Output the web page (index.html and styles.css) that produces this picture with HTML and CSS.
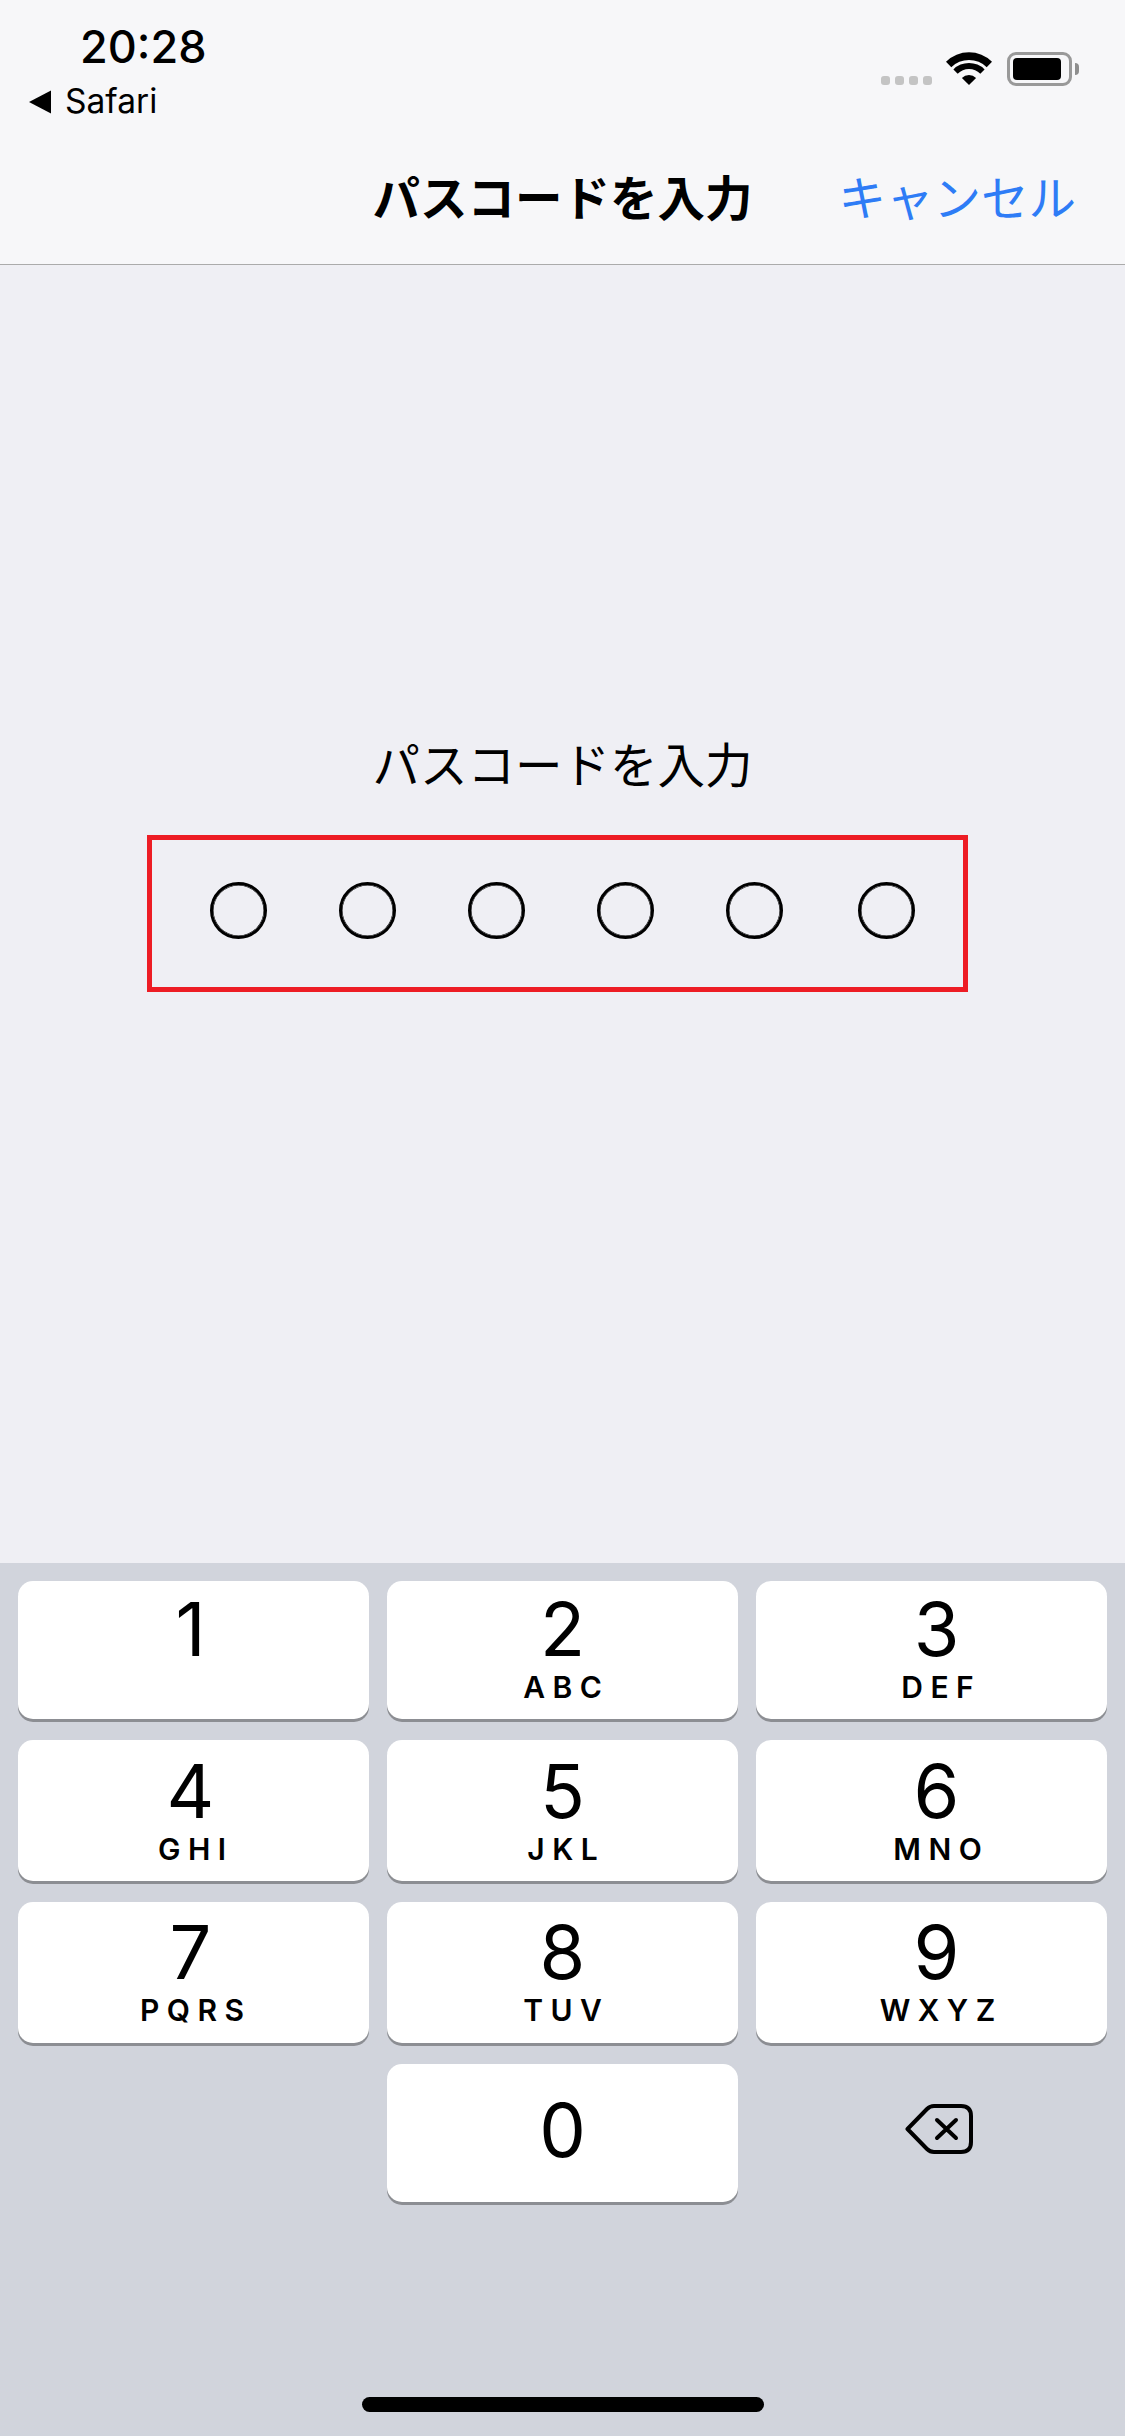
FILE: index.html
```html
<!DOCTYPE html>
<html lang="ja">
<head>
<meta charset="utf-8">
<title>パスコードを入力</title>
<link rel="stylesheet" href="styles.css">
</head>
<body>
<div class="screen">
  <header class="header">
    <div class="statusbar">
      <div class="status-left">
        <div class="time">20:28</div>
        <div class="backlink">
          <svg class="back-tri" width="22" height="24" viewBox="0 0 22 24"><path d="M0 12 L22 0.5 V23.5 Z" fill="#000"/></svg>
          <span>Safari</span>
        </div>
      </div>
      <div class="status-right">
        <div class="signal"><i></i><i></i><i></i><i></i></div>
        <svg class="wifi" width="46" height="34" viewBox="0 0 46 34">
          <path d="M0 9.7 A33 33 0 0 1 46 9.7 L40.7 15.3 A25 25 0 0 0 5.3 15.3 Z" fill="#000"/>
          <path d="M7.4 17.4 A22 22 0 0 1 38.6 17.4 L34.3 21.7 A16 16 0 0 0 11.7 21.7 Z" fill="#000"/>
          <path d="M23 33 L15.9 25.9 A10 10 0 0 1 30.1 25.9 Z" fill="#000"/>
        </svg>
        <div class="battery"><div class="battery-fill"></div></div>
        <div class="battery-cap"></div>
      </div>
    </div>
    <div class="navbar">
      <span></span>
      <h1 class="nav-title">パスコードを入力</h1>
      <a class="nav-cancel">キャンセル</a>
    </div>
  </header>
  <main class="main">
    <p class="prompt">パスコードを入力</p>
    <div class="dots-frame">
      <span class="dot"></span>
      <span class="dot"></span>
      <span class="dot"></span>
      <span class="dot"></span>
      <span class="dot"></span>
      <span class="dot dot-last"></span>
    </div>
  </main>
  <section class="keyboard">
    <div class="keys">
      <div class="key row1 col1"><span class="num">1</span></div>
      <div class="key row1"><span class="num">2</span><span class="letters">ABC</span></div>
      <div class="key row1 col3"><span class="num">3</span><span class="letters">DEF</span></div>
      <div class="key row2 col1"><span class="num">4</span><span class="letters">GHI</span></div>
      <div class="key row2"><span class="num">5</span><span class="letters">JKL</span></div>
      <div class="key row2 col3"><span class="num">6</span><span class="letters">MNO</span></div>
      <div class="key row3 col1"><span class="num">7</span><span class="letters">PQRS</span></div>
      <div class="key row3"><span class="num">8</span><span class="letters">TUV</span></div>
      <div class="key row3 col3"><span class="num">9</span><span class="letters">WXYZ</span></div>
      <div class="key-blank"></div>
      <div class="key row4"><span class="num">0</span></div>
      <div class="key-delete">
        <svg width="68" height="50" viewBox="0 0 68 50" fill="none" stroke="#000" stroke-width="4" stroke-linejoin="round" stroke-linecap="round">
          <path d="M2.5 25 L22 5 Q25 2 29 2 H56 Q66 2 66 12 V38 Q66 48 56 48 H29 Q25 48 22 45 Z"/>
          <path d="M32 16 L51 34 M51 16 L32 34"/>
        </svg>
      </div>
    </div>
    <div class="home-bar"></div>
  </section>
</div>
</body>
</html>
```

FILE: styles.css
```css
* { box-sizing: border-box; }
html, body { margin: 0; padding: 0; }
body {
  width: 1125px;
  height: 2436px;
  overflow: hidden;
  background: #efeff4;
  color: #000;
  font-family: Inter, "Noto Sans CJK JP", sans-serif;
}
.screen {
  width: 1125px;
  height: 2436px;
  display: flex;
  flex-direction: column;
}
.header {
  height: 265px;
  background: #f7f7f9;
  border-bottom: 1px solid #ababab;
}
.statusbar {
  height: 130px;
  display: flex;
  justify-content: space-between;
  align-items: flex-start;
}
.status-left { padding: 25px 0 0 29px; }
.time {
  font-size: 45px;
  line-height: 44px;
  font-weight: 550;
  margin-left: 51px;
}
.backlink {
  display: flex;
  align-items: center;
  gap: 14px;
  margin-top: 16px;
  font-size: 33.5px;
  line-height: 33px;
}
.back-tri { flex: none; }
.status-right {
  display: flex;
  align-items: flex-start;
  padding: 52px 46px 0 0;
}
.signal {
  display: flex;
  gap: 5px;
  margin-top: 24px;
  margin-right: 14px;
}
.signal i {
  width: 9px;
  height: 9px;
  border-radius: 3px;
  background: #c4c4c4;
}
.wifi { margin-right: 15px; }
.battery {
  width: 65px;
  height: 34px;
  border: 3px solid #999;
  border-radius: 9px;
  padding: 3px;
}
.battery-fill {
  width: 48px;
  height: 22px;
  background: #000;
  border-radius: 4px;
}
.battery-cap {
  width: 4px;
  height: 12px;
  margin: 11px 0 0 3px;
  background: #8e8e8e;
  border-radius: 0 6px 6px 0;
}
.navbar {
  height: 134px;
  display: grid;
  grid-template-columns: 1fr auto 1fr;
  align-items: center;
  padding: 3px 49px 0;
}
.nav-title {
  margin: 0;
  font-size: 47.5px;
  line-height: 56px;
  font-weight: 700;
}
.nav-cancel {
  justify-self: end;
  font-size: 47.5px;
  line-height: 56px;
  color: #2e7cf6;
}
.main {
  flex: 1;
  padding-top: 473px;
}
.prompt {
  margin: 0;
  text-align: center;
  font-size: 47.5px;
  line-height: 56px;
  font-weight: 400;
}
.dots-frame {
  width: 821px;
  height: 157px;
  margin: 41px 0 0 147px;
  padding: 42px 0 0 58px;
  border: 5px solid #ed1c24;
  display: flex;
  gap: 72px;
  align-items: flex-start;
}
.dot {
  width: 57px;
  height: 57px;
  border: 3px solid #000;
  box-shadow: inset 0 0 0 0.5px #000;
  border-radius: 50%;
  flex: none;
}
.dot-last { margin-left: 3px; }
.keyboard {
  height: 873px;
  background: #d1d4dc;
  padding: 18px 18px 24px;
  display: flex;
  flex-direction: column;
  justify-content: space-between;
}
.keys {
  display: grid;
  grid-template-columns: repeat(3, 351px);
  grid-template-rows: 138px 141px 141px 138px;
  column-gap: 18px;
  row-gap: 21px;
}
.key {
  background: #fff;
  border-radius: 15px;
  box-shadow: 0 3px 0 #8c8e93;
  display: flex;
  flex-direction: column;
  align-items: center;
}
.row1 { padding-top: 11px; }
.row2 { padding-top: 14px; }
.row3 { padding-top: 13px; }
.row4 { padding-top: 29px; }
.col3 { padding-left: 12px; }
.col3 .num { margin-right: 2px; }
.col1 .num { margin-right: 6px; }
.col1 .letters { margin-right: 3px; }
.num {
  font-size: 74px;
  line-height: 74px;
  font-weight: 380;
}
.letters {
  margin-top: 6px;
  font-size: 30px;
  line-height: 30px;
  font-weight: 600;
  letter-spacing: 7.5px;
  text-indent: 7.5px;
}
.key-delete {
  display: flex;
  align-items: center;
  justify-content: center;
  padding: 0 0 8px 15px;
}
.home-bar {
  width: 402px;
  height: 15px;
  align-self: center;
  border-radius: 8px;
  background: #000;
}
```
